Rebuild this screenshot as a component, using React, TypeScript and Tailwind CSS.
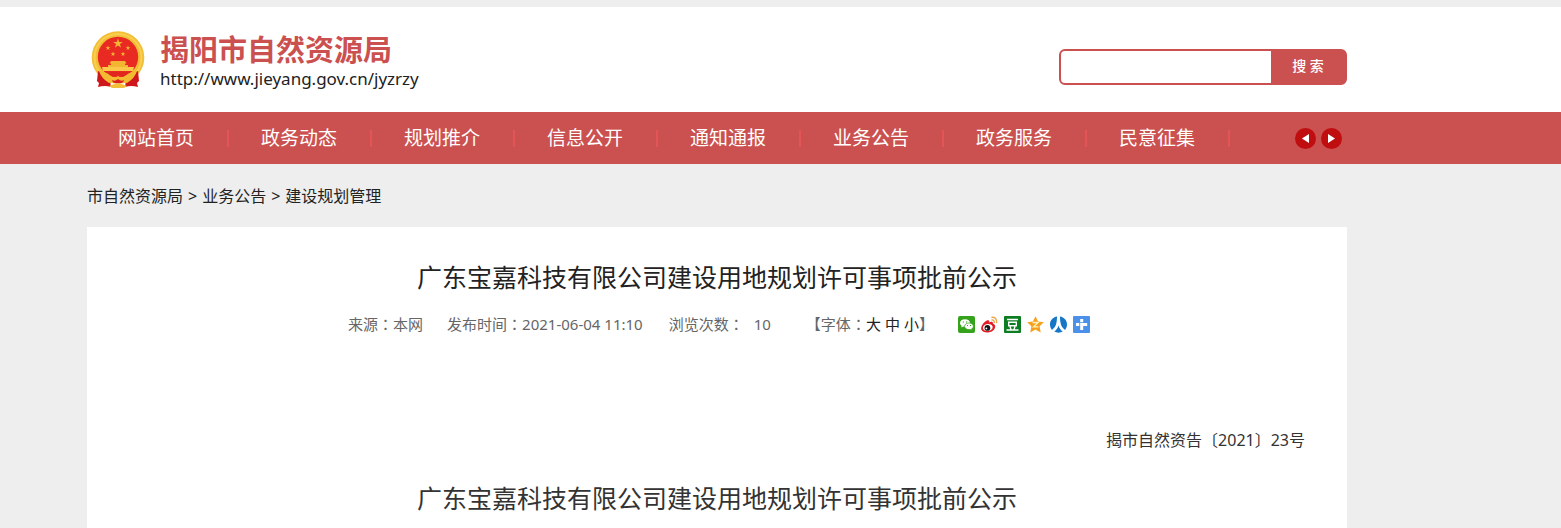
import React from "react";

const navItems = ["网站首页", "政务动态", "规划推介", "信息公开", "通知通报", "业务公告", "政务服务", "民意征集"];
const title = "广东宝嘉科技有限公司建设用地规划许可事项批前公示";

function Emblem() {
  const star = "M0-5 1.2-1.6 4.8-1.6 1.9.6 3 4 0 1.9-3 4-1.9.6-4.8-1.6-1.2-1.6Z";
  return (
    <svg viewBox="0 0 54 58" className="h-[58px] w-[54px]" aria-hidden="true">
      <circle cx="27" cy="26.500" r="26.300" fill="#f3bd35" />
      <circle cx="27" cy="26.500" r="23.500" fill="none" stroke="#f9cf50" strokeWidth="2" />
      <circle cx="27" cy="26" r="20.200" fill="#e92a22" />
      <g fill="#f4b632">
        <path d={star} transform="translate(27 12.500)" />
        <path d={star} transform="translate(17 17) scale(.5)" />
        <path d={star} transform="translate(37 17) scale(.5)" />
        <path d={star} transform="translate(22 23) scale(.5)" />
        <path d={star} transform="translate(32 23) scale(.5)" />
        <path d="M20 30h14l1.500 2.500H34V34h3v3H17v-3h3v-1.500h-1.500Z" />
      </g>
      <path d="M11 36h32l-1 4H12Z" fill="#fbc94a" />
      <path d="M7 40q7 2 12 9l1 7q-6-2-13 0l1-4-2-2Z" fill="#cf171b" />
      <path d="M47 40q-7 2-12 9l-1 7q6-2 13 0l-1-4 2-2Z" fill="#cf171b" />
      <path d="M8 40q10 1 14 8l5-3 5 3q4-7 14-8-2 7-10 12-9-3-18 0-8-5-10-12Z" fill="#f3b931" />
      <path d="M15 41h24q-4 2-7 5l-5-3-5 3q-3-3-7-5Z" fill="#e0271f" />
      <path d="M21 49q3 2 6-1 3 3 6 1-1 4-6 3-5 1-6-3Z" fill="#d91f20" />
      <path d="M18 55q9-5 18 0l-3 2H21Z" fill="#f4bf38" />
    </svg>
  );
}

function Colon() {
  return <span className="font-['Noto_Sans_CJK_TC',sans-serif]">：</span>;
}

const shareIcons = [
  {
    label: "微信",
    art: (
      <>
        <rect width="17" height="17" rx="2" fill="#35a21c" />
        <path d="M7 3.200c-3 0-5 1.600-5 3.800 0 1.200.6 2.100 1.600 2.800L3.300 11.500l1.900-.9c.5.1 1.100.2 1.800.2 2.900 0 5-1.600 5-3.800S10 3.200 7 3.200Z" fill="#fff" />
        <path d="M11 7c-2.600 0-4.400 1.400-4.400 3.300S8.400 13.600 11 13.600l1.300-.1 1.700.9-.4-1.500c1.100-.6 1.800-1.500 1.800-2.600C15.400 8.400 13.600 7 11 7Z" fill="#fff" stroke="#35a21c" strokeWidth=".7" />
        <path d="M4.700 5.500h1.200v1H4.700ZM8 5.500h1.200v1H8ZM9 9h1v.9H9ZM12 9h1v.9h-1Z" fill="#35a21c" />
      </>
    ),
  },
  {
    label: "微博",
    art: (
      <>
        <path d="M6.500 4.300C8 4 8.600 5 8.200 6.400c2-.9 4-.8 3.700 1.200 3.500 1 2.600 5.500-.4 7.400-3.600 2.300-9.900 2-11.200-1.500C-.6 10.600 3.200 5.100 6.500 4.300Z" fill="#e21b25" />
        <ellipse cx="6.800" cy="11.500" rx="4.900" ry="3.500" fill="#fff" transform="rotate(-8 6.800 11.500)" />
        <circle cx="6.400" cy="11.900" r="2.900" fill="#151515" />
        <circle cx="5.400" cy="12.400" r=".9" fill="#fff" />
        <path d="M10.500 4q3-.5 2.900 3M10.400 1.300q5.600-.6 5.400 6" fill="none" stroke="#eda34a" strokeWidth="1.300" />
      </>
    ),
  },
  {
    label: "豆瓣",
    art: (
      <>
        <rect width="17" height="17" rx="1" fill="#0c7d22" />
        <path d="M3 3.500h11M4.700 6.200h7.600v3.600H4.700ZM6 10.500l1 3M11 10.500l-1 3M2.500 14h12" fill="none" stroke="#fff" strokeWidth="1.400" />
      </>
    ),
  },
  {
    label: "QQ空间",
    art: (
      <>
        <path d="m8.500.3 2.600 5.100 5.700.8-4.200 4 1.100 6.200-5.200-3-5.200 3 1.100-6.200-4.200-4 5.700-.8Z" fill="#f5a11e" />
        <path d="M5.600 6.500h5.500l-4.600 4.400h4.900" fill="none" stroke="#fff4bd" strokeWidth="1.300" />
      </>
    ),
  },
  {
    label: "人人网",
    art: (
      <>
        <path d="M7 .6C2.900 1.200 0 4.500 0 8.500c0 2.200.8 4 2 5.400C5.500 11.400 7 8 7 .6ZM10 .6c4.100.6 7 3.900 7 7.900 0 2.200-.8 4-2 5.400C11.500 11.400 10 8 10 .6Z" fill="#1677c7" />
        <path d="M8.500 9.500c-.8 2.700-2.300 4.700-4.300 6.100 2.600 1.500 6 1.500 8.600 0-2-1.400-3.500-3.400-4.300-6.100Z" fill="#1677c7" />
      </>
    ),
  },
  {
    label: "更多分享",
    art: (
      <>
        <rect width="17" height="17" rx="1" fill="#4b91e9" />
        <path d="M7.200 3h3v3.300h-3ZM3 7h3.300v3H3ZM7.200 7h7v3h-4v4h-3Z" fill="#fff" />
      </>
    ),
  },
];

export default function App() {
  return (
    <div className="flex min-h-screen flex-col bg-[#eeeeee] pt-[7px] font-['Noto_Sans','Noto_Sans_CJK_SC',sans-serif] text-[#222222]">
      <header className="bg-white pl-[87px]">
        <div className="flex h-[105px] w-full max-w-[1260px] items-center justify-between">
          <a href="#home" className="flex items-center gap-[15px] pl-1">
            <Emblem />
            <div className="pt-[6px]">
              <h1 className="text-[29px] leading-8 font-bold text-[#cb5150]">揭阳市自然资源局</h1>
              <p className="text-[17px] leading-[26px]">http://www.jieyang.gov.cn/jyzrzy</p>
            </div>
          </a>
          <form className="mt-[14px] flex h-9 w-72 overflow-hidden rounded-md border-2 border-[#cb5150] bg-[#cb5150]" onSubmit={(e) => e.preventDefault()}>
            <input type="search" aria-label="搜索" className="min-w-0 flex-1 bg-white px-2 text-sm outline-none" />
            <button type="submit" className="w-[74px] pb-[2px] text-sm font-medium text-white">搜 索</button>
          </form>
        </div>
      </header>

      <nav className="bg-[#cb5150] pl-[86px]">
        <div className="flex h-[52px] w-full max-w-[1260px] items-center justify-between">
          <ul className="flex items-center">
            {navItems.map((item) => (
              <li key={item} className="flex w-[143px] items-center justify-between pl-8">
                <a href="#nav" className="text-[19px] leading-7 whitespace-nowrap text-white">{item}</a>
                <span className="h-[17px] w-[2px] bg-[#e45456]" />
              </li>
            ))}
          </ul>
          <div className="flex gap-[5px] pr-1">
            <button type="button" aria-label="上一组" className="flex size-[21px] items-center justify-center rounded-full bg-[#c00d0f]">
              <svg viewBox="0 0 21 21" className="size-[21px]"><path d="M7 10.500 14 6v9Z" fill="#fff" /></svg>
            </button>
            <button type="button" aria-label="下一组" className="flex size-[21px] items-center justify-center rounded-full bg-[#c00d0f]">
              <svg viewBox="0 0 21 21" className="size-[21px]"><path d="M14 10.500 7 6v9Z" fill="#fff" /></svg>
            </button>
          </div>
        </div>
      </nav>

      <div className="flex grow flex-col pl-[87px]">
        <div className="flex h-[63px] items-center gap-[5px] text-base">
          <a href="#bureau">市自然资源局</a>
          <span>&gt;</span>
          <a href="#notice">业务公告</a>
          <span>&gt;</span>
          <a href="#planning">建设规划管理</a>
        </div>
        <main className="w-full max-w-[1260px] grow bg-white pt-8">
          <h2 className="text-center text-[25px] leading-9">{title}</h2>
          <div className="mt-[17px] flex items-center justify-center pl-1 text-[15px] leading-6 whitespace-nowrap text-[#666666]">
            <span>来源<Colon />本网</span>
            <span className="ml-6">发布时间<Colon />2021-06-04 11:10</span>
            <span className="ml-[26px]">浏览次数<Colon /></span>
            <span className="ml-[10px]">10</span>
            <span className="ml-[35px] flex">
              <span>【字体<Colon /></span>
              <span className="flex gap-1 text-[#222222]">
                <button type="button">大</button>
                <button type="button">中</button>
                <button type="button">小</button>
              </span>
              <span>】</span>
            </span>
            <span className="ml-6 flex gap-[6px]">
              {shareIcons.map((icon) => (
                <a key={icon.label} href="#share" aria-label={icon.label}>
                  <svg viewBox="0 0 17 17" className="size-[17px]">{icon.art}</svg>
                </a>
              ))}
            </span>
          </div>
          <p className="mt-[92px] pr-[42px] text-right text-base text-[#333333]">揭市自然资告〔2021〕23号</p>
          <p className="mt-7 text-center text-[25px] leading-9 text-[#333333]">{title}</p>
        </main>
      </div>
    </div>
  );
}
